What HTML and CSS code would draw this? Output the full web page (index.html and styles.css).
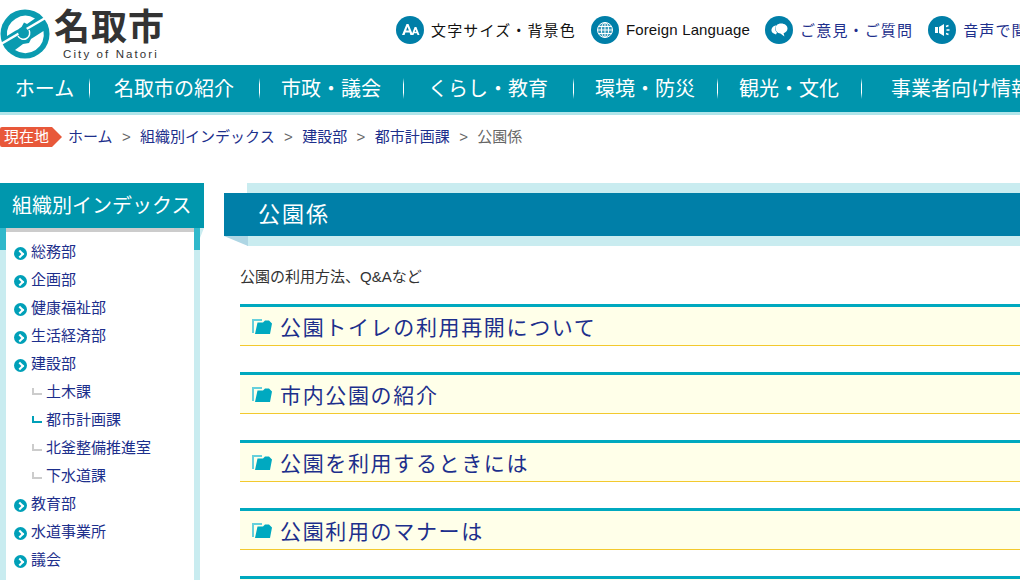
FILE: index.html
```html
<!DOCTYPE html>
<html lang="ja">
<head>
    <meta charset="UTF-8">
    <meta name="viewport" content="width=device-width, initial-scale=1.0">
    <title>公園係 | 名取市</title>
    <link rel="stylesheet" href="styles.css">
</head>
<body>

    <header class="header">
        <a class="logo" href="#">
            <svg class="logo-mark" viewBox="0 0 50 50" width="50" height="50">
                <circle cx="25" cy="25" r="24.5" fill="#0a9bb0"/>
                <path d="M7 27 A18.5 18.5 0 0 1 35 9.5 L27 15 L24 13.5 L21 19 L15 22 Z" fill="#fff"/>
                <path d="M15 41 A18.5 18.5 0 0 0 43.5 22 L31 30 L29 34 L23 35 Z" fill="#fff"/>
                <path d="M1 35 L47 8" stroke="#fff" stroke-width="2.5"/>
                <circle cx="23" cy="23" r="5" fill="#0a9bb0"/>
                <path d="M18 27 A6 6 0 0 0 29 21" fill="none" stroke="#fff" stroke-width="1.5"/>
            </svg>
            <span class="logo-text">
                <span class="logo-name">名取市</span>
                <span class="logo-en">City of Natori</span>
            </span>
        </a>
        <ul class="tools">
            <li class="tool">
                <span class="tool-icon">
                    <svg viewBox="0 0 28 28" width="28" height="28">
                        <path d="M6 19 L10.5 8 H12.5 L17 19 H14.4 L13.6 16.6 H9.4 L8.6 19 Z M10.1 14.6 H12.9 L11.5 10.8 Z" fill="#fff"/>
                        <path d="M15.5 19 L18.6 11 H20.4 L23.5 19 H21.5 L20.9 17.3 H18.1 L17.5 19 Z M18.7 15.7 H20.3 L19.5 13.4 Z" fill="#fff"/>
                    </svg>
                </span>
                <a class="tool-dark" href="#">文字サイズ・背景色</a>
            </li>
            <li class="tool">
                <span class="tool-icon">
                    <svg viewBox="0 0 28 28" width="28" height="28" fill="none" stroke="#fff" stroke-width="1">
                        <circle cx="14" cy="14" r="7.5" fill="#cfe8f0" fill-opacity=".25"/>
                        <ellipse cx="14" cy="14" rx="3.6" ry="7.5"/>
                        <path d="M14 6.5 V21.5 M6.5 14 H21.5 M7.6 10.5 H20.4 M7.6 17.5 H20.4"/>
                    </svg>
                </span>
                <a class="tool-dark tool-latin" href="#">Foreign Language</a>
            </li>
            <li class="tool">
                <span class="tool-icon">
                    <svg viewBox="0 0 28 28" width="28" height="28">
                        <path d="M11 18.5 C7.5 17.5 6 15.5 6.5 13.2 C7 11 9 9.6 11.5 9.3 C9.8 11.2 9.6 14.6 12 16.5 Z" fill="#fff"/>
                        <path d="M16 7.5 C20 7.5 22.5 9.8 22.5 12.6 C22.5 15 20.6 16.8 18.6 17.3 L19.4 20.5 L15.4 17.6 C12.2 17.2 10.5 15.2 10.5 12.6 C10.5 9.8 12.6 7.5 16 7.5 Z" fill="#fff"/>
                    </svg>
                </span>
                <a href="#">ご意見・ご質問</a>
            </li>
            <li class="tool">
                <span class="tool-icon">
                    <svg viewBox="0 0 28 28" width="28" height="28">
                        <path d="M7 11 H10 V17 H7 Z M11 11 L16 8 V20 L11 17 Z" fill="#fff"/>
                        <path d="M18 10.5 L20.5 9.5 M18.5 14 H21.5 M18 17.5 L20.5 18.5" stroke="#fff" stroke-width="1.4"/>
                    </svg>
                </span>
                <a href="#">音声で聞く</a>
            </li>
        </ul>
    </header>

    <nav class="gnav">
        <a class="gnav-item gnav-home" href="#">ホーム</a>
        <a class="gnav-item gnav-wide" href="#">名取市の紹介</a>
        <a class="gnav-item" href="#">市政・議会</a>
        <a class="gnav-item gnav-wide" href="#">くらし・教育</a>
        <a class="gnav-item" href="#">環境・防災</a>
        <a class="gnav-item" href="#">観光・文化</a>
        <a class="gnav-item gnav-last" href="#">事業者向け情報</a>
    </nav>

    <div class="crumbs">
        <span class="crumbs-tag">現在地</span>
        <a href="#">ホーム</a>
        <span class="crumbs-sep">&gt;</span>
        <a href="#">組織別インデックス</a>
        <span class="crumbs-sep">&gt;</span>
        <a href="#">建設部</a>
        <span class="crumbs-sep">&gt;</span>
        <a href="#">都市計画課</a>
        <span class="crumbs-sep">&gt;</span>
        <span class="crumbs-now">公園係</span>
    </div>

    <div class="layout">
        <aside class="side">
            <h2 class="side-title">組織別インデックス</h2>
            <div class="side-body">
                <ul class="side-list">
                    <li><a href="#">総務部</a></li>
                    <li><a href="#">企画部</a></li>
                    <li><a href="#">健康福祉部</a></li>
                    <li><a href="#">生活経済部</a></li>
                    <li><a href="#">建設部</a>
                        <ul class="side-sub">
                            <li><a href="#">土木課</a></li>
                            <li class="current"><a href="#">都市計画課</a></li>
                            <li><a href="#">北釜整備推進室</a></li>
                            <li><a href="#">下水道課</a></li>
                        </ul>
                    </li>
                    <li><a href="#">教育部</a></li>
                    <li><a href="#">水道事業所</a></li>
                    <li><a href="#">議会</a></li>
                </ul>
            </div>
        </aside>

        <main class="main">
            <div class="page-title">
                <h1>公園係</h1>
            </div>
            <p class="intro">公園の利用方法、Q&amp;Aなど</p>

            <h3 class="topic"><svg class="folder" viewBox="0 0 20 15" width="20" height="15"><path d="M1 14 V1 H10" fill="none" stroke="#66d0dc" stroke-width="2"/><path d="M3 15 L5.5 3.5 H11 L13 1.5 H17 L20 4.5 L18 15 Z" fill="#00a9c0"/></svg><a href="#">公園トイレの利用再開について</a></h3>
            <h3 class="topic"><svg class="folder" viewBox="0 0 20 15" width="20" height="15"><path d="M1 14 V1 H10" fill="none" stroke="#66d0dc" stroke-width="2"/><path d="M3 15 L5.5 3.5 H11 L13 1.5 H17 L20 4.5 L18 15 Z" fill="#00a9c0"/></svg><a href="#">市内公園の紹介</a></h3>
            <h3 class="topic"><svg class="folder" viewBox="0 0 20 15" width="20" height="15"><path d="M1 14 V1 H10" fill="none" stroke="#66d0dc" stroke-width="2"/><path d="M3 15 L5.5 3.5 H11 L13 1.5 H17 L20 4.5 L18 15 Z" fill="#00a9c0"/></svg><a href="#">公園を利用するときには</a></h3>
            <h3 class="topic"><svg class="folder" viewBox="0 0 20 15" width="20" height="15"><path d="M1 14 V1 H10" fill="none" stroke="#66d0dc" stroke-width="2"/><path d="M3 15 L5.5 3.5 H11 L13 1.5 H17 L20 4.5 L18 15 Z" fill="#00a9c0"/></svg><a href="#">公園利用のマナーは</a></h3>
            <div class="topic"></div>
        </main>
    </div>

</body>
</html>
```

FILE: styles.css
```css
html, body {
    height: 580px;
    overflow: hidden;
}
body {
    margin: 0;
    font-family: "Liberation Sans", "Noto Sans CJK JP", sans-serif;
    font-size: 15px;
    color: #333;
    background-color: #fff;
}
a {
    color: #1d2f8c;
    text-decoration: none;
}
ul {
    list-style: none;
    margin: 0;
    padding: 0;
}

/* header */
.header {
    display: flex;
    align-items: center;
    height: 65px;
    white-space: nowrap;
}
.logo {
    display: flex;
    flex: 0 0 396px;
    height: 65px;
    color: #333;
}
.logo-mark {
    margin: 9px 4px 0 0;
}
.logo-text {
    display: flex;
    flex-direction: column;
    align-items: center;
    padding-top: 5px;
}
.logo-name {
    font-size: 36px;
    font-weight: bold;
    letter-spacing: 1px;
    line-height: 46px;
}
.logo-en {
    font-size: 11.5px;
    letter-spacing: 2.1px;
    line-height: 12px;
    margin-top: -3px;
    padding-left: 3px;
}
.tools {
    display: flex;
    gap: 15px;
    margin-bottom: 6px;
}
.tool {
    display: flex;
    align-items: center;
    gap: 7px;
    letter-spacing: 1.15px;
}
.tool-icon {
    display: block;
    width: 28px;
    height: 28px;
    border-radius: 50%;
    background-color: #007fa8;
}
.tool-icon svg {
    display: block;
}
.tool-dark {
    color: #111;
}
.tool-latin {
    letter-spacing: 0.15px;
}

/* global nav */
.gnav {
    display: flex;
    height: 47px;
    border-bottom: 3px solid #b0e5ea;
    background-color: #0095ad;
    overflow: hidden;
}
.gnav-item {
    position: relative;
    flex: 0 0 144px;
    font-size: 20px;
    line-height: 48px;
    text-align: center;
    white-space: nowrap;
    color: #fff;
}
.gnav-item::after {
    content: "";
    position: absolute;
    right: -1px;
    top: 13px;
    width: 1px;
    height: 21px;
    background: linear-gradient(#0095ad, #fff 30%, #fff 70%, #0095ad);
}
.gnav-home {
    flex-basis: 89px;
}
.gnav-wide {
    flex-basis: 170px;
}
.gnav-last {
    flex-basis: 200px;
}
.gnav-last::after {
    display: none;
}

/* breadcrumb */
.crumbs {
    display: flex;
    align-items: center;
    gap: 9.4px;
    height: 20px;
    margin-top: 12px;
    line-height: 20px;
    white-space: nowrap;
}
.crumbs-tag {
    position: relative;
    width: 52px;
    height: 20px;
    margin-right: 6.6px;
    padding-left: 4px;
    box-sizing: border-box;
    border-radius: 2px 0 0 2px;
    color: #fff;
    background-color: #e8583a;
}
.crumbs-tag::after {
    content: "";
    position: absolute;
    left: 52px;
    top: 0;
    border-left: 10px solid #e8583a;
    border-top: 10px solid transparent;
    border-bottom: 10px solid transparent;
}
.crumbs-sep,
.crumbs-now {
    color: #666;
}

/* columns */
.layout {
    display: flex;
    gap: 20px;
    margin-top: 36px;
}

/* side menu */
.side {
    flex: 0 0 204px;
}
.side-title {
    position: relative;
    height: 45px;
    margin: 0;
    padding-left: 12px;
    font-size: 20px;
    font-weight: normal;
    line-height: 47px;
    color: #fff;
    background-color: #0097ad;
}
.side-title::after {
    content: "";
    position: absolute;
    left: 200px;
    top: 45px;
    border-top: 10px solid #c9ecf0;
    border-right: 4px solid transparent;
}
.side-body {
    position: relative;
    box-sizing: border-box;
    width: 200px;
    height: 400px;
    border-left: 6px solid #c9ecf0;
    border-right: 6px solid #c9ecf0;
    border-top: 4px solid #ccc;
    background-color: #fff;
}
.side-body::before,
.side-body::after {
    content: "";
    position: absolute;
    top: -4px;
    width: 6px;
    height: 22px;
    background-color: #30b8cb;
}
.side-body::before {
    left: -6px;
}
.side-body::after {
    right: -6px;
}
.side-list {
    padding: 6px 0 0 8px;
    line-height: 28px;
}
.side-list > li > a {
    position: relative;
    display: flex;
    align-items: center;
    gap: 4px;
}
.side-list > li > a::before {
    content: "";
    flex: 0 0 13px;
    height: 13px;
    margin-top: 3px;
    border-radius: 50%;
    background-color: #00a0b8;
}
.side-list > li > a::after {
    content: "";
    position: absolute;
    left: 3px;
    top: 13px;
    width: 4px;
    height: 4px;
    border-top: 2px solid #fff;
    border-right: 2px solid #fff;
    transform: rotate(45deg);
}
.side-sub > li {
    position: relative;
    padding-left: 32px;
}
.side-sub > li::before {
    content: "";
    position: absolute;
    left: 18px;
    top: 10px;
    width: 8px;
    height: 5px;
    border-left: 2px solid #ccc;
    border-bottom: 2px solid #ccc;
}
.side-sub > li.current::before {
    border-color: #00a0b8;
}

/* main column */
.main {
    flex: 1;
    min-width: 0;
}
.page-title {
    position: relative;
    margin-left: 23px;
    padding: 10px 0;
    background-color: #c9ecf0;
}
.page-title h1 {
    height: 43px;
    margin: 0 0 0 -23px;
    padding-left: 34px;
    font-size: 22px;
    font-weight: normal;
    letter-spacing: 2px;
    line-height: 43px;
    color: #fff;
    background-color: #007fa8;
}
.page-title::after {
    content: "";
    position: absolute;
    left: -23px;
    top: 53px;
    border-top: 10px solid #aed6e4;
    border-left: 24px solid transparent;
}
.intro {
    height: 58px;
    margin: 0 0 0 16px;
    line-height: 62px;
}
.topic {
    display: flex;
    align-items: center;
    gap: 8px;
    height: 38px;
    margin: 0 0 26px 16px;
    padding-left: 12px;
    border-top: 3px solid #00a9bf;
    border-bottom: 1px solid #f3c92e;
    font-size: 21px;
    font-weight: normal;
    letter-spacing: 1.65px;
    white-space: nowrap;
    background-color: #ffffe9;
}
```
